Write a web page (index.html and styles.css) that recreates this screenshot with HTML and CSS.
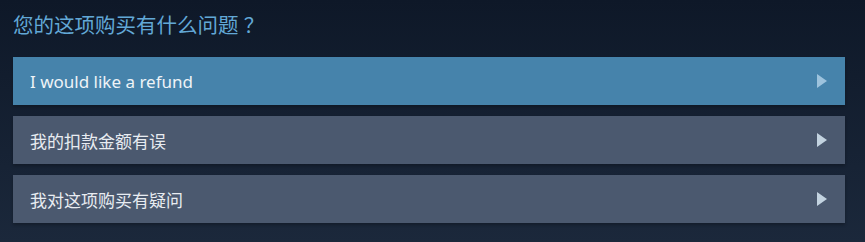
FILE: index.html
```html
<!DOCTYPE html>
<html lang="zh">
<head>
    <meta charset="UTF-8">
    <meta name="viewport" content="width=device-width, initial-scale=1.0">
    <title>购买问题</title>
    <link rel="stylesheet" href="styles.css">
</head>
<body>
    <div class="help-page">
        <h2 class="help-title">您的这项购买有什么问题 ？</h2>

        <div class="help-options">
            <a class="help-option active" href="#">
                <span>I would like a refund</span>
                <span class="arrow"></span>
            </a>
            <a class="help-option" href="#">
                <span>我的扣款金额有误</span>
                <span class="arrow"></span>
            </a>
            <a class="help-option" href="#">
                <span>我对这项购买有疑问</span>
                <span class="arrow"></span>
            </a>
        </div>
    </div>
</body>
</html>
```

FILE: styles.css
```css
body {
    margin: 0;
    font-family: "Noto Sans", "Noto Sans CJK SC", sans-serif;
    background: linear-gradient(to bottom, #0e1828, #1b283b);
    height: 242px;
    overflow: hidden;
}

.help-page {
    padding: 9px 20px 0 13px;
}

.help-title {
    margin: 0 0 16px;
    font-size: 20.5px;
    font-weight: normal;
    line-height: 32px;
    color: #62a8d6;
}

.help-options {
    display: flex;
    flex-direction: column;
    gap: 11px;
}

.help-option {
    display: flex;
    align-items: center;
    justify-content: space-between;
    height: 48px;
    padding: 0 18px 0 17px;
    background: #4b596f;
    color: #e8ecf1;
    font-size: 17px;
    text-decoration: none;
    box-shadow: 0 2px 3px rgba(0, 0, 0, 0.25);
}

.help-option.active {
    background: #4683ab;
    color: #eef3f7;
}

.arrow {
    width: 0;
    height: 0;
    border-top: 7px solid transparent;
    border-bottom: 7px solid transparent;
    border-left: 10px solid #c3d3e0;
}

.help-option.active .arrow {
    border-left-color: #9dc3dd;
}
```
